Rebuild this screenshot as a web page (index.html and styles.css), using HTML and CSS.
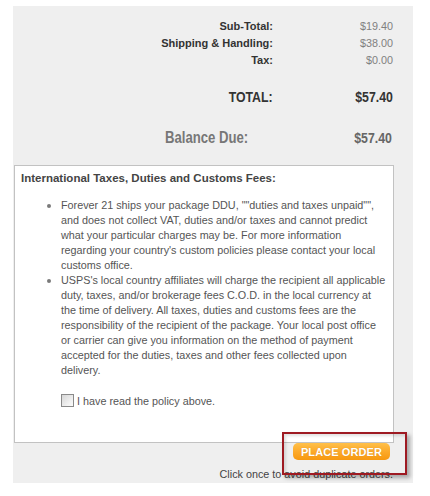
FILE: index.html
```html
<!DOCTYPE html>
<html>
<head>
<meta charset="utf-8">
<link rel="stylesheet" href="styles.css">
</head>
<body>
<div class="page">
  <div class="panel">
    <div class="totals">
      <div class="line"><span class="label">Sub-Total:</span><span class="value">$19.40</span></div>
      <div class="line"><span class="label">Shipping &amp; Handling:</span><span class="value">$38.00</span></div>
      <div class="line"><span class="label">Tax:</span><span class="value">$0.00</span></div>
      <div class="line total"><span class="label"><span class="narrow">TOTAL:</span></span><span class="value"><span class="narrow">$57.40</span></span></div>
      <div class="line balance"><span class="label"><span class="narrow">Balance Due:</span></span><span class="value"><span class="narrow">$57.40</span></span></div>
    </div>
    <div class="policy">
      <h3 class="policy-title">International Taxes, Duties and Customs Fees:</h3>
      <ul class="policy-list">
        <li><span>Forever 21 ships your package DDU, ""duties and taxes unpaid"",<br>and does not collect VAT, duties and/or taxes and cannot predict<br>what your particular charges may be. For more information<br>regarding your country's custom policies please contact your local<br>customs office.</span></li>
        <li><span>USPS's local country affiliates will charge the recipient all applicable<br>duty, taxes, and/or brokerage fees C.O.D. in the local currency at<br>the time of delivery. All taxes, duties and customs fees are the<br>responsibility of the recipient of the package. Your local post office<br>or carrier can give you information on the method of payment<br>accepted for the duties, taxes and other fees collected upon<br>delivery.</span></li>
      </ul>
      <label class="agree"><input type="checkbox" class="check"><span>I have read the policy above.</span></label>
    </div>
    <button class="place-order" type="button">PLACE ORDER</button>
    <p class="note">Click once to avoid duplicate orders.</p>
  </div>
  <div class="highlight"></div>
</div>
</body>
</html>
```

FILE: styles.css
```css
html, body {
  margin: 0;
  padding: 0;
  background: #ffffff;
}

.page {
  position: relative;
  width: 430px;
  height: 496px;
  overflow: hidden;
  font-family: "Liberation Sans", Arial, sans-serif;
}

.panel {
  margin: 6px 0 0 13px;
  width: 400px;
  height: 477px;
  box-sizing: border-box;
  padding-top: 12px;
  background: #efefef;
  display: flex;
  flex-direction: column;
}

.totals {
  display: flex;
  flex-direction: column;
}

.line {
  display: grid;
  grid-template-columns: 260px 120px;
  align-items: baseline;
  font-size: 11px;
  line-height: 17px;
}

.line .label {
  text-align: right;
  font-weight: bold;
  color: #333333;
}

.line .value {
  text-align: right;
  color: #808080;
  font-size: 10.8px;
}

.narrow {
  display: inline-block;
  transform: scaleX(0.82);
  transform-origin: right center;
  font-weight: bold;
}

.line.total {
  margin-top: 17.5px;
  line-height: 20px;
}

.line.total .label,
.line.total .value {
  font-size: 15px;
  color: #333333;
}

.line.balance {
  margin-top: 21px;
  line-height: 20px;
}

.line.balance .label {
  text-align: left;
  padding-left: 152px;
  font-size: 16px;
  color: #777777;
}

.line.balance .label .narrow {
  transform-origin: left center;
}

.line.balance .value {
  font-size: 15px;
  color: #666666;
  padding-right: 1px;
}

.policy {
  margin: 17.5px 0 0 1px;
  width: 380px;
  height: 278px;
  box-sizing: border-box;
  border: 1px solid #c2c2c2;
  background: #ffffff;
  padding: 6.5px 2px 0 6px;
  display: flex;
  flex-direction: column;
  align-items: flex-start;
}

.policy-title {
  margin: 0;
  font-size: 11.5px;
  line-height: 10px;
  font-weight: bold;
  color: #444444;
}

.policy-list {
  margin: 15px 0 0;
  padding: 0 0 0 26px;
  list-style: none;
  font-size: 10.8px;
  line-height: 15px;
  color: #555555;
  white-space: nowrap;
}

.policy-list li {
  display: grid;
  grid-template-columns: 14px auto;
}

.policy-list li::before {
  content: "";
  width: 4px;
  height: 4px;
  margin-top: 6px;
  border-radius: 50%;
  background: #7a7a7a;
}

.agree {
  margin: 16.3px 0 0 40px;
  display: flex;
  align-items: flex-start;
  font-size: 10.8px;
  line-height: 15px;
  color: #555555;
}

.check {
  appearance: none;
  -webkit-appearance: none;
  margin: 0 3px 0 0;
  width: 13px;
  height: 13px;
  box-sizing: border-box;
  border: 1px solid #8a8a8a;
  background: linear-gradient(135deg, #d6d6d6 0%, #f2f2f2 70%, #fafafa 100%);
}

.place-order {
  align-self: flex-end;
  margin: 0 23px 0 0;
  width: 97px;
  height: 17px;
  padding: 1px 0 0;
  border: none;
  border-radius: 5px;
  background: linear-gradient(#ffc04a 0%, #fcaa2a 50%, #f7980f 100%);
  color: #ffffff;
  font-family: "Liberation Sans", Arial, sans-serif;
  font-weight: bold;
  font-size: 11px;
  letter-spacing: 0.1px;
  line-height: 16px;
  text-shadow: 0 0 1px rgba(150, 80, 0, 0.35);
}

.note {
  align-self: flex-end;
  margin: 7.3px 20px 0 0;
  font-size: 10.8px;
  line-height: 15px;
  color: #444444;
}

.highlight {
  position: absolute;
  left: 282px;
  top: 432px;
  width: 125px;
  height: 43px;
  box-sizing: border-box;
  border: 2px solid #9e1a22;
  box-shadow: 3px 3px 4px rgba(0, 0, 0, 0.3), inset 2px 2px 3px rgba(0, 0, 0, 0.12);
}
```
